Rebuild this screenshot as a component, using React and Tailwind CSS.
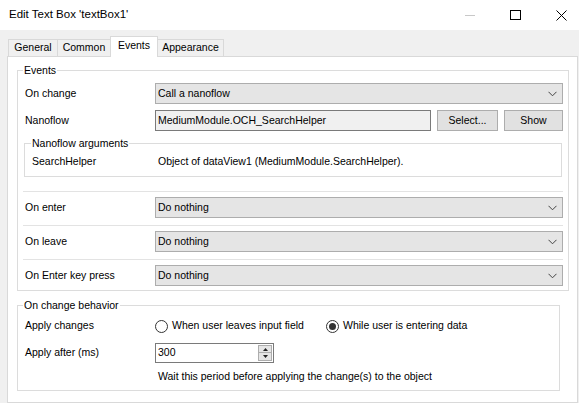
import React from "react";

const Chevron = () => (
  <svg width="9" height="6" viewBox="0 0 9 6" className="mr-[5px] shrink-0">
    <path d="M0.5 0.8 L4.5 4.8 L8.5 0.8" fill="none" stroke="#444" strokeWidth="1" />
  </svg>
);

const Dropdown = ({ value }) => (
  <div className="w-[408px] h-[21px] bg-[#e5e5e5] border border-[#adadad] flex items-center pl-[2px]">
    <span className="flex-1">{value}</span>
    <Chevron />
  </div>
);

const Tab = ({ label, active, w, first }) => (
  <div
    className={
      (first ? "" : "-ml-px ") +
      (active
        ? "relative z-10 h-[21px] -mb-px bg-white border border-b-0 border-[#d9d9d9] pb-[3px] "
        : "h-[17px] bg-[#f0f0f0] border border-b-0 border-[#d9d9d9] ") +
      "flex items-center justify-center " +
      w
    }
  >
    {label}
  </div>
);

const Radio = ({ checked }) => (
  <span className="w-[13px] h-[13px] rounded-full border border-[#333] bg-white flex items-center justify-center shrink-0">
    {checked && <span className="w-[7px] h-[7px] rounded-full bg-[#333]" />}
  </span>
);

const Row = ({ label, last, children }) => (
  <div
    className={
      "border-t border-[#e3e3e3] pt-[5px] flex items-center " +
      (last ? "pb-[4px]" : "pb-[7px]")
    }
  >
    <span className="w-[132px] pl-[2px]">{label}</span>
    {children}
  </div>
);

export default function App() {
  return (
    <div className="w-[579px] h-[403px] overflow-hidden bg-[#f0f0f0] flex flex-col text-black text-[10.5px] font-['Liberation_Sans',Arial,sans-serif]">
      {/* title bar */}
      <div className="h-[30px] shrink-0 bg-white flex items-center pl-[9px] pr-[12px] text-[11.5px]">
        <span>Edit Text Box 'textBox1'</span>
        <div className="ml-auto flex items-center">
          <span className="w-[10px] h-px bg-[#c8c8c8]" />
          <span className="ml-[35px] w-[11px] h-[10px] border border-black" />
          <svg width="11" height="11" viewBox="0 0 11 11" className="ml-[35px]">
            <path d="M0.5 0.5 L10.5 10.5 M10.5 0.5 L0.5 10.5" stroke="#000" strokeWidth="1" />
          </svg>
        </div>
      </div>

      {/* tabs */}
      <div className="h-[26px] shrink-0 pl-[8px] flex items-end">
        <Tab label="General" w="w-[50px]" first />
        <Tab label="Common" w="w-[54px]" />
        <Tab label="Events" w="w-[48px]" active />
        <Tab label="Appearance" w="w-[67px]" />
      </div>

      {/* tab panel */}
      <div className="flex-1 ml-[7px] mr-px bg-white border border-[#d9d9d9] pl-[9px] pt-[6px]">
        <fieldset className="w-[552px] border border-[#dcdcdc] px-[5px]">
          <legend className="px-[1px] leading-[14px]">Events</legend>

          <div className="mt-[6px] flex items-center">
            <span className="w-[132px] pl-[2px]">On change</span>
            <Dropdown value="Call a nanoflow" />
          </div>

          <div className="mt-[6px] flex items-center">
            <span className="w-[132px] pl-[2px]">Nanoflow</span>
            <div className="w-[276px] h-[21px] bg-[#f0f0f0] border border-[#7a7a7a] flex items-center pl-[2px]">
              MediumModule.OCH_SearchHelper
            </div>
            <button className="ml-[6px] w-[61px] h-[21px] bg-[#e1e1e1] border border-[#adadad] flex items-center justify-center">
              Select...
            </button>
            <button className="ml-[6px] w-[59px] h-[21px] bg-[#e1e1e1] border border-[#adadad] flex items-center justify-center">
              Show
            </button>
          </div>

          <fieldset className="mt-[5px] mx-px border border-[#dcdcdc] pl-[7px] pb-[7px]">
            <legend className="px-[1px] -ml-px leading-[14px]">Nanoflow arguments</legend>
            <div className="mt-[5px] h-[14px] flex items-center">
              <span className="w-[126px]">SearchHelper</span>
              <span>Object of dataView1 (MediumModule.SearchHelper).</span>
            </div>
          </fieldset>

          <div className="mt-[14px]">
            <Row label="On enter">
              <Dropdown value="Do nothing" />
            </Row>
            <Row label="On leave">
              <Dropdown value="Do nothing" />
            </Row>
            <Row label="On Enter key press" last>
              <Dropdown value="Do nothing" />
            </Row>
          </div>
        </fieldset>

        <fieldset className="mt-[7px] w-[543px] border border-[#dcdcdc] px-[5px] pb-[6px]">
          <legend className="px-[1px] leading-[14px]">On change behavior</legend>

          <div className="mt-[4px] h-[20px] flex items-center">
            <span className="w-[132px] pl-[2px]">Apply changes</span>
            <div className="w-[171px] flex items-center">
              <Radio />
              <span className="ml-[4px]">When user leaves input field</span>
            </div>
            <div className="flex items-center">
              <Radio checked />
              <span className="ml-[4px]">While user is entering data</span>
            </div>
          </div>

          <div className="mt-[7px] h-[20px] flex items-center">
            <span className="w-[132px] pl-[2px]">Apply after (ms)</span>
            <div className="w-[119px] h-[20px] bg-white border border-[#7a7a7a] flex items-center pl-[2px] pr-px">
              <span className="flex-1">300</span>
              <div className="w-[14px] h-[16px] flex flex-col">
                <div className="h-[8px] bg-[#e5e5e5] border border-[#adadad] flex items-center justify-center">
                  <svg width="5" height="3" viewBox="0 0 5 3">
                    <path d="M0 3 L2.5 0 L5 3 Z" fill="#222" />
                  </svg>
                </div>
                <div className="h-[8px] bg-[#e5e5e5] border border-t-0 border-[#adadad] flex items-center justify-center">
                  <svg width="5" height="3" viewBox="0 0 5 3">
                    <path d="M0 0 L2.5 3 L5 0 Z" fill="#222" />
                  </svg>
                </div>
              </div>
            </div>
          </div>

          <div className="mt-[7px] h-[14px] ml-[135px] flex items-center">
            Wait this period before applying the change(s) to the object
          </div>
        </fieldset>
      </div>
    </div>
  );
}
